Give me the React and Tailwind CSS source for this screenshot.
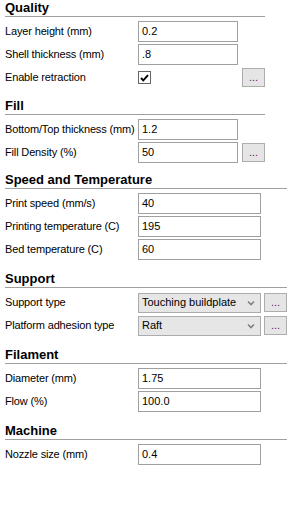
import React from 'react';

// Print settings panel (Cura-style basic tab)
const font = { fontFamily: '"Liberation Sans", Arial, sans-serif' };

function Heading({ title, wide }) {
  return (
    <div
      className={`h-[17px] border-b border-[#a0a0a0] text-[13px] font-bold leading-[16px] text-black ${
        wide ? 'w-[282px]' : 'w-[260px]'
      }`}
    >
      {title}
    </div>
  );
}

function MoreButton() {
  return (
    <button className="ml-[4px] flex h-[19px] w-[23px] items-center justify-center border border-[#adadad] bg-[#e5e5e5] text-[11px] leading-none text-[#6a0f6f]">
      ...
    </button>
  );
}

function TextRow({ label, value, wide, more }) {
  return (
    <div className="flex h-[23px] items-center">
      <span className="w-[133px] shrink-0 text-[11px] tracking-[-0.15px] text-black">{label}</span>
      <div
        className={`flex h-[21px] items-center border border-[#a0a0a0] bg-white pl-[3px] text-[11px] text-black ${
          wide ? 'w-[123px]' : 'w-[100px]'
        }`}
      >
        {value}
      </div>
      {more && <MoreButton />}
    </div>
  );
}

function SelectRow({ label, value }) {
  return (
    <div className="flex h-[23px] items-center">
      <span className="w-[133px] shrink-0 text-[11px] tracking-[-0.15px] text-black">{label}</span>
      <div className="flex h-[20px] w-[123px] items-center justify-between border border-[#acacac] bg-[#e6e6e6] pl-[3px] pr-[5px] text-[11px] text-black">
        <span>{value}</span>
        <svg width="8" height="6" viewBox="0 0 8 6">
          <path d="M1 1.5 L4 4.5 L7 1.5" fill="none" stroke="#808080" strokeWidth="1.6" />
        </svg>
      </div>
      <button className="ml-[3px] flex h-[19px] w-[23px] items-center justify-center border border-[#adadad] bg-[#e5e5e5] text-[11px] leading-none text-[#6a0f6f]">
        ...
      </button>
    </div>
  );
}

function CheckRow({ label }) {
  return (
    <div className="flex h-[23px] items-center">
      <span className="w-[133px] shrink-0 text-[11px] tracking-[-0.15px] text-black">{label}</span>
      <div className="flex w-[100px] items-center">
        <div className="flex h-[13px] w-[13px] items-center justify-center border border-[#666666] bg-white">
          <svg width="9" height="8" viewBox="0 0 9 8">
            <path d="M1 4 L3.3 6.3 L8 1.2" fill="none" stroke="#000" strokeWidth="1.9" />
          </svg>
        </div>
      </div>
      <MoreButton />
    </div>
  );
}

export default function App() {
  return (
    <div className="h-[512px] w-[308px] bg-white pl-[5px]" style={font}>
      {/* Quality */}
      <Heading title="Quality" />
      <div className="pt-[3px]">
        <TextRow label="Layer height (mm)" value="0.2" />
        <TextRow label="Shell thickness (mm)" value=".8" />
        <CheckRow label="Enable retraction" />
      </div>

      {/* Fill */}
      <div className="mt-[9px]">
        <Heading title="Fill" />
        <div className="pt-[3px]">
          <TextRow label="Bottom/Top thickness (mm)" value="1.2" />
          <TextRow label="Fill Density (%)" value="50" more />
        </div>
      </div>

      {/* Speed and Temperature */}
      <div className="mt-[8px]">
        <Heading title="Speed and Temperature" wide />
        <div className="pt-[3px]">
          <TextRow label="Print speed (mm/s)" value="40" wide />
          <TextRow label="Printing temperature (C)" value="195" wide />
          <TextRow label="Bed temperature (C)" value="60" wide />
        </div>
      </div>

      {/* Support */}
      <div className="mt-[10px]">
        <Heading title="Support" wide />
        <div className="pt-[3px]">
          <SelectRow label="Support type" value="Touching buildplate" />
          <SelectRow label="Platform adhesion type" value="Raft" />
        </div>
      </div>

      {/* Filament */}
      <div className="mt-[10px]">
        <Heading title="Filament" wide />
        <div className="pt-[3px]">
          <TextRow label="Diameter (mm)" value="1.75" wide />
          <TextRow label="Flow (%)" value="100.0" wide />
        </div>
      </div>

      {/* Machine */}
      <div className="mt-[10px]">
        <Heading title="Machine" wide />
        <div className="pt-[3px]">
          <TextRow label="Nozzle size (mm)" value="0.4" wide />
        </div>
      </div>
    </div>
  );
}
